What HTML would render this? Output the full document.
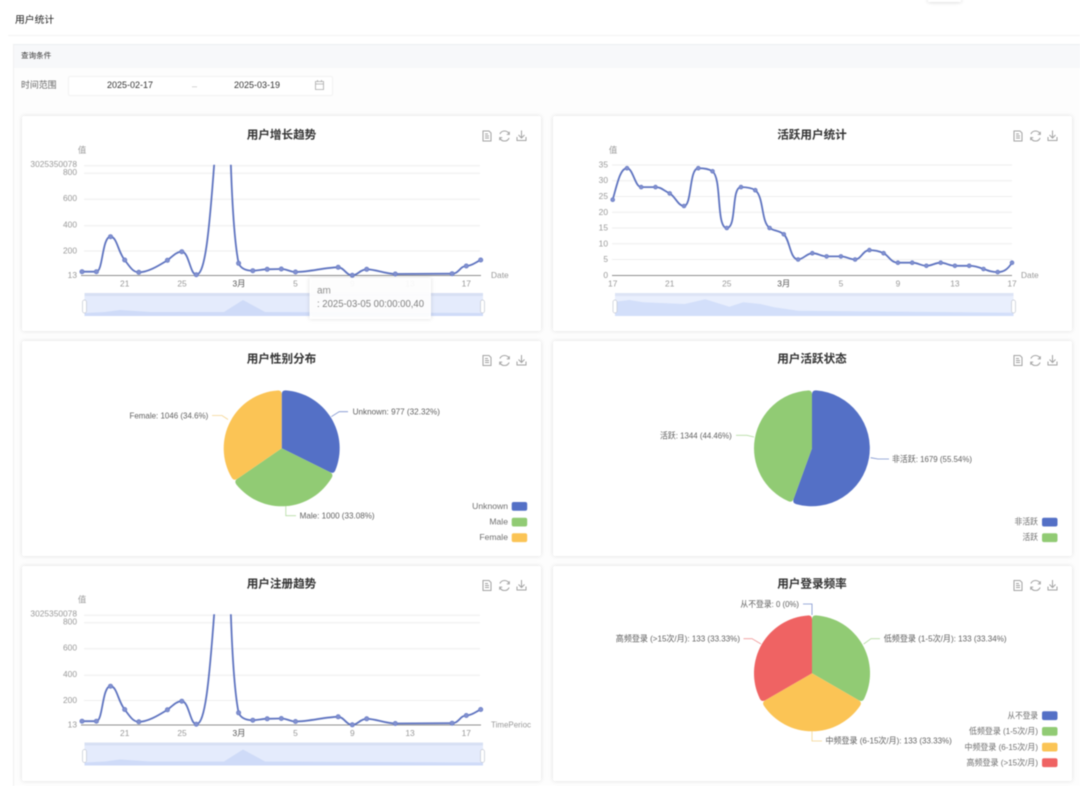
<!DOCTYPE html>
<html lang="zh-CN">
<head>
<meta charset="utf-8">
<title>用户统计</title>
<style>
html,body{margin:0;padding:0;width:1080px;height:786px;overflow:hidden;background:#fff;}
#page{position:relative;width:1080px;height:786px;overflow:hidden;background:#fff;filter:blur(.5px);font-family:"Liberation Sans","Noto Sans CJK SC",sans-serif;}
.abs{position:absolute;box-sizing:border-box;}
.card{position:absolute;background:#fff;border-radius:2px;box-shadow:0 0 5px rgba(0,0,0,.13);}
svg{position:absolute;left:0;top:0;}
svg text{font-family:"Liberation Sans","Noto Sans CJK SC",sans-serif;dominant-baseline:central;}
.title{font-size:11.6px;font-weight:700;fill:#333;text-anchor:middle;}
.ax{font-size:8.4px;fill:#999;}
.yl{font-size:8.4px;fill:#999;text-anchor:end;}
.xl{font-size:8.4px;fill:#999;text-anchor:middle;}
.m3{font-weight:400;fill:#555;}
.lb{font-size:8.6px;fill:#5f5f5f;}
.lg{font-size:8.6px;fill:#6f6f6f;text-anchor:end;}
.grid{stroke:#eeeeee;stroke-width:1;fill:none;}
.axis{stroke:#8f8f8f;stroke-width:1;fill:none;}
.ln{stroke:#5f74c0;stroke-width:1.8;fill:none;}
.dot{fill:#8291d0;stroke:#6c7fc6;stroke-width:.8;}
.ic{stroke:#a3a3a3;stroke-width:1;fill:none;}
.lead{fill:none;stroke-width:.8;}
</style>
</head>
<body>
<div id="page">
  <div class="abs" style="left:928px;top:-4px;width:33px;height:6px;background:#fff;box-shadow:0 0 4px rgba(0,0,0,.2);"></div>
  <div class="abs" style="left:15px;top:14px;font-size:9.8px;line-height:14px;color:#222;">用户统计</div>
  <div class="abs" style="left:8px;top:35px;width:1072px;height:1px;background:#f3f3f3;"></div>
  <div class="abs" style="left:13px;top:44px;width:1067px;height:742px;background:#fdfdfd;border-left:1px solid #f0f0f0;border-top:1px solid #eceef0;"></div>
  <div class="abs" style="left:14px;top:45px;width:1066px;height:23px;background:#f7f8fa;"></div>
  <div class="abs" style="left:21px;top:50px;font-size:7.6px;line-height:12px;color:#333;">查询条件</div>
  <div class="abs" style="left:21px;top:78px;font-size:8.9px;line-height:14px;color:#666;">时间范围</div>
  <div class="abs" style="left:68px;top:76px;width:265px;height:20px;background:#fff;border:1px solid #f2f2f2;border-radius:2px;"></div>
  <div class="abs" style="left:107px;top:78px;font-size:9px;line-height:14px;color:#333;">2025-02-17</div>
  <div class="abs" style="left:192px;top:79px;font-size:9px;line-height:14px;color:#bbb;">–</div>
  <div class="abs" style="left:234px;top:78px;font-size:9px;line-height:14px;color:#333;">2025-03-19</div>

  <div class="card" style="left:22px;top:116px;width:519px;height:215px;"></div>
  <div class="card" style="left:553px;top:116px;width:519px;height:215px;"></div>
  <div class="card" style="left:22px;top:341px;width:519px;height:215px;"></div>
  <div class="card" style="left:553px;top:341px;width:519px;height:215px;"></div>
  <div class="card" style="left:22px;top:566px;width:519px;height:215px;"></div>
  <div class="card" style="left:553px;top:566px;width:519px;height:215px;"></div>

  <svg width="1080" height="786" viewBox="0 0 1080 786" xmlns="http://www.w3.org/2000/svg">
    <defs>
      <clipPath id="c1"><rect x="60" y="164.7" width="440" height="114"/></clipPath>
      <g id="tools">
        <path class="ic" d="M-4,-5 H2 L4,-3 V5 H-4 Z M-2,-2 H1 M-2,0 H2 M-2,2 H2"/>
        <path class="ic" d="M12.9,-2 A5,5 0 0 1 22.1,-2 M22.1,2 A5,5 0 0 1 12.9,2 M22.3,-4.3 V-1.6 H19.8 M12.7,4.3 V1.6 H15.2" />
        <path class="ic" d="M34.5,-5.5 V2 M31.5,-1 L34.5,2 L37.5,-1 M30,1 V4.5 H39 V1"/>
      </g>
      <g id="trend">
        <path class="ln" d="M82,271.7 L96.4,271.7 C103,271.7 102,236.7 110.5,236.7 C117,236.7 118,252 124.7,260 C130,267 133,272.3 138.8,272.3 C148,272.3 158,266 167.4,260.3 C172,257 176,251.7 181.8,251.7 C189,251.7 190,274.7 196.3,274.7 C205,274.7 209,235 214.5,160 L230.7,160 C232,200 234,240 238.6,263.3 C241,269 246,270.7 252.8,270.7 C258,270.7 262,269.3 267.2,269.3 L281.3,269 C287,269 290,272 295.5,272 C310,272 325,267.3 338.2,267.3 C344,267.3 346,275.3 352.3,275.3 C358,275.3 360,269.3 366.7,269.3 C376,269.3 385,274 395.3,274 L452.1,273.7 C459,273.7 460,266 466.3,266 C472,266 476,262 480.7,260"/>
        <g class="dot">
          <circle cx="82" cy="271.7" r="2.1"/><circle cx="96.4" cy="271.7" r="2.1"/><circle cx="110.5" cy="236.7" r="2.1"/><circle cx="124.7" cy="260" r="2.1"/><circle cx="138.8" cy="272.3" r="2.1"/><circle cx="167.4" cy="260.3" r="2.1"/><circle cx="181.8" cy="251.7" r="2.1"/><circle cx="196.3" cy="274.7" r="2.1"/><circle cx="238.6" cy="263.3" r="2.1"/><circle cx="252.8" cy="270.7" r="2.1"/><circle cx="267.2" cy="269.3" r="2.1"/><circle cx="281.3" cy="269" r="2.1"/><circle cx="295.5" cy="272" r="2.1"/><circle cx="338.2" cy="267.3" r="2.1"/><circle cx="352.3" cy="275.3" r="2.1"/><circle cx="366.7" cy="269.3" r="2.1"/><circle cx="395.3" cy="274" r="2.1"/><circle cx="452.1" cy="273.7" r="2.1"/><circle cx="466.3" cy="266" r="2.1"/><circle cx="480.7" cy="260" r="2.1"/>
        </g>
      </g>
      <g id="dz">
        <rect x="84.5" y="293" width="398.5" height="23" fill="#e4ebfc"/>
        <rect x="84.5" y="293" width="398.5" height="3" fill="#d8e0f3"/>
        <path d="M84.5,313 L105,312 L120,310 L150,312 L224,312 L243,300 L265,312 L483,313 V316 H84.5 Z" fill="#cfdbf8"/>
        <rect x="82.5" y="300" width="4" height="13" rx="2" fill="#fff" stroke="#c4c9d4" stroke-width=".7"/>
        <rect x="480.5" y="300" width="4" height="13" rx="2" fill="#fff" stroke="#c4c9d4" stroke-width=".7"/>
      </g>
    </defs>

    <!-- calendar icon -->
    <path d="M315.5,81.5 H323.5 V89.5 H315.5 Z M315.5,84 H323.5 M317.5,80 V82 M321.5,80 V82" fill="none" stroke="#aaa" stroke-width=".8"/>

    <!-- titles -->
    <text class="title" x="281.5" y="135">用户增长趋势</text>
    <text class="title" x="812" y="135">活跃用户统计</text>
    <text class="title" x="281.5" y="359">用户性别分布</text>
    <text class="title" x="812" y="359">用户活跃状态</text>
    <text class="title" x="281.5" y="584">用户注册趋势</text>
    <text class="title" x="812" y="584">用户登录频率</text>

    <!-- toolbars -->
    <use href="#tools" x="487" y="136"/>
    <use href="#tools" x="1018" y="136"/>
    <use href="#tools" x="487" y="360.5"/>
    <use href="#tools" x="1018" y="360.5"/>
    <use href="#tools" x="487" y="585.5"/>
    <use href="#tools" x="1018" y="585.5"/>

    <!-- chart 1 -->
    <path class="grid" d="M84,165.7H480M84,173.3H480M84,199.3H480M84,225.7H480M84,251H480"/>
    <path class="axis" d="M81,275.5H481"/>
    <g clip-path="url(#c1)"><use href="#trend"/></g>
    <text class="xl" x="82" y="150">值</text>
    <text class="yl" x="77" y="164">3025350078</text>
    <text class="yl" x="77" y="172">800</text>
    <text class="yl" x="77" y="198">600</text>
    <text class="yl" x="77" y="224.5">400</text>
    <text class="yl" x="77" y="250.5">200</text>
    <text class="yl" x="77" y="275">13</text>
    <text class="xl" x="124.7" y="283.5">21</text>
    <text class="xl" x="182" y="283.5">25</text>
    <text class="xl m3" x="239" y="283.5">3月</text>
    <text class="xl" x="295.5" y="283.5">5</text>
    <text class="xl" x="466.3" y="283.5">17</text>
    <text class="ax" x="491" y="275">Date</text>
    <use href="#dz"/>
    <text class="xl" x="352.3" y="283.5">9</text>
    <text class="xl" x="410" y="283.5">13</text>
    <!-- tooltip -->
    <rect x="309.5" y="278" width="121.5" height="41" fill="#fff" fill-opacity=".93" style="filter:drop-shadow(0 0 2px rgba(0,0,0,.14))"/>
    <text x="317" y="291" style="font-size:10px;fill:#8f8f8f">am</text>
    <text x="317" y="304.5" textLength="107" lengthAdjust="spacingAndGlyphs" style="font-size:10.4px;fill:#808080">: 2025-03-05 00:00:00,40</text>

    <!-- chart 2 -->
    <path class="grid" d="M612,165H1012M612,180.8H1012M612,196.5H1012M612,212.3H1012M612,228H1012M612,243.8H1012M612,259.5H1012"/>
    <path class="axis" d="M612,275.5H1012"/>
    <path class="ln" d="M612.7,199.7 C617,185 620,168.2 627,168.2 C633,168.2 635,187.1 641.2,187.1 L655.5,187.1 C661,187.1 663,190 669.7,193.4 C675,196 678,206 684,206 C692,206 689,168.2 698.3,168.2 C705,168.2 709,169 712.5,171.3 C722,178 716,228 726.8,228 C737,228 731,187.1 741,187.1 C747,187.1 752,188 755.3,190.2 C764,197 761,222 769.6,228 C773,231 779,230 783.8,234.3 C790,240 790,259.5 798.1,259.5 C803,259.5 807,253.2 812.3,253.2 C818,253.2 821,256.4 826.6,256.4 L840.9,256.4 C846,256.4 850,259.5 855.1,259.5 C861,259.5 863,250.1 869.4,250.1 C875,250.1 879,251 883.6,253.2 C889,256 891,262.7 897.9,262.7 L912.2,262.7 C918,262.7 921,265.8 926.4,265.8 C932,265.8 935,262.7 940.7,262.7 C946,262.7 949,265.8 954.9,265.8 L969.2,265.8 C975,265.8 978,267 983.5,269 C989,271 992,272.1 997.7,272.1 C1004,272.1 1008,269 1012,262.7"/>
    <g class="dot">
      <circle cx="612.7" cy="199.7" r="1.9"/><circle cx="627" cy="168.2" r="1.9"/><circle cx="641.2" cy="187.1" r="1.9"/><circle cx="655.5" cy="187.1" r="1.9"/><circle cx="669.7" cy="193.4" r="1.9"/><circle cx="684" cy="206" r="1.9"/><circle cx="698.3" cy="168.2" r="1.9"/><circle cx="712.5" cy="171.3" r="1.9"/><circle cx="726.8" cy="228" r="1.9"/><circle cx="741" cy="187.1" r="1.9"/><circle cx="755.3" cy="190.2" r="1.9"/><circle cx="769.6" cy="228" r="1.9"/><circle cx="783.8" cy="234.3" r="1.9"/><circle cx="798.1" cy="259.5" r="1.9"/><circle cx="812.3" cy="253.2" r="1.9"/><circle cx="826.6" cy="256.4" r="1.9"/><circle cx="840.9" cy="256.4" r="1.9"/><circle cx="855.1" cy="259.5" r="1.9"/><circle cx="869.4" cy="250.1" r="1.9"/><circle cx="883.6" cy="253.2" r="1.9"/><circle cx="897.9" cy="262.7" r="1.9"/><circle cx="912.2" cy="262.7" r="1.9"/><circle cx="926.4" cy="265.8" r="1.9"/><circle cx="940.7" cy="262.7" r="1.9"/><circle cx="954.9" cy="265.8" r="1.9"/><circle cx="969.2" cy="265.8" r="1.9"/><circle cx="983.5" cy="269" r="1.9"/><circle cx="997.7" cy="272.1" r="1.9"/><circle cx="1012" cy="262.7" r="1.9"/>
    </g>
    <text class="xl" x="613" y="150">值</text>
    <text class="yl" x="608" y="164.5">35</text>
    <text class="yl" x="608" y="180">30</text>
    <text class="yl" x="608" y="196">25</text>
    <text class="yl" x="608" y="212">20</text>
    <text class="yl" x="608" y="227.5">15</text>
    <text class="yl" x="608" y="243.5">10</text>
    <text class="yl" x="608" y="259">5</text>
    <text class="yl" x="608" y="275">0</text>
    <text class="xl" x="612.7" y="283.5">17</text>
    <text class="xl" x="669.7" y="283.5">21</text>
    <text class="xl" x="726.8" y="283.5">25</text>
    <text class="xl m3" x="783.8" y="283.5">3月</text>
    <text class="xl" x="840.9" y="283.5">5</text>
    <text class="xl" x="897.9" y="283.5">9</text>
    <text class="xl" x="954.9" y="283.5">13</text>
    <text class="xl" x="1012" y="283.5">17</text>
    <text class="ax" x="1021" y="275">Date</text>
    <rect x="615" y="293" width="398.5" height="23" fill="#e9effd"/>
    <rect x="615" y="293" width="398.5" height="3" fill="#dde4f5"/>
    <path d="M615,301.7 L629.5,300 L643.3,302.3 L684.6,304 L705.3,299.3 L729.4,306.7 L743.2,302.3 L760.4,304 L774.2,307.3 L798.3,310.7 L1013.5,312.7 V316 H615 Z" fill="#d3dffa"/>
    <rect x="613" y="300" width="4" height="13" rx="2" fill="#fff" stroke="#c4c9d4" stroke-width=".7"/>
    <rect x="1011.5" y="300" width="4" height="13" rx="2" fill="#fff" stroke="#c4c9d4" stroke-width=".7"/>

    <!-- pie 1 -->
    <path fill="#5470c6" d="M281.7,448.3 L281.7,394.3 Q281.7,390.3 285.7,390.4 A58,58 0 0 1 335.3,470.35 Q333.7,474.04 330.1,472.27 Z"/>
    <path fill="#91cb74" d="M281.7,448.3 L330.1,472.27 Q333.7,474.04 331.75,477.6 A58,58 0 0 1 236.35,484.46 Q233.93,481.2 237.23,478.93 Z"/>
    <path fill="#fbc455" d="M281.7,448.3 L237.23,478.93 Q233.93,481.2 231.76,477.79 A58,58 0 0 1 277.65,390.44 Q281.7,390.3 281.7,394.3 Z"/>
    <path class="lead" stroke="#7d92cf" d="M331.3,416.7 L339.2,411.7 H348"/>
    <path class="lead" stroke="#f5d590" d="M212,415.5 H222 L228,419.5"/>
    <path class="lead" stroke="#b5dca3" d="M285.8,506 V515.7 H296"/>
    <text class="lb" x="352.6" y="411.3" textLength="87.4" lengthAdjust="spacingAndGlyphs">Unknown: 977 (32.32%)</text>
    <text class="lb" x="129.5" y="415.3" textLength="78.8" lengthAdjust="spacingAndGlyphs">Female: 1046 (34.6%)</text>
    <text class="lb" x="299.6" y="515.3" textLength="75" lengthAdjust="spacingAndGlyphs">Male: 1000 (33.08%)</text>
    <rect x="511.7" y="502" width="15.5" height="8.8" rx="2" fill="#5470c6"/>
    <rect x="511.7" y="517.7" width="15.5" height="8.8" rx="2" fill="#91cb74"/>
    <rect x="511.7" y="533.3" width="15.5" height="8.8" rx="2" fill="#fbc455"/>
    <text class="lg" x="508" y="506">Unknown</text>
    <text class="lg" x="508" y="521.5">Male</text>
    <text class="lg" x="508" y="537">Female</text>

    <!-- pie 2 -->
    <path fill="#5470c6" d="M812,448.3 L812,394.3 Q812,390.3 816,390.4 A58,58 0 1 1 796.07,504.07 Q792.2,502.83 793.59,499.06 Z"/>
    <path fill="#91cb74" d="M812,448.3 L793.59,499.06 Q792.2,502.83 788.47,501.31 A58,58 0 0 1 807.95,390.44 Q812,390.3 812,394.3 Z"/>
    <path class="lead" stroke="#7d92cf" d="M870.6,457.7 L878,459 H889"/>
    <path class="lead" stroke="#b5dca3" d="M736,435.3 H747 L754,437"/>
    <text class="lb" x="892" y="459" textLength="80" lengthAdjust="spacingAndGlyphs">非活跃: 1679 (55.54%)</text>
    <text class="lb" x="660" y="435.3" textLength="71.8" lengthAdjust="spacingAndGlyphs">活跃: 1344 (44.46%)</text>
    <rect x="1042" y="517.7" width="15.5" height="8.8" rx="2" fill="#5470c6"/>
    <rect x="1042" y="533.3" width="15.5" height="8.8" rx="2" fill="#91cb74"/>
    <text class="lg" x="1038" y="521.5" textLength="23.5" lengthAdjust="spacingAndGlyphs">非活跃</text>
    <text class="lg" x="1038" y="537" textLength="15.5" lengthAdjust="spacingAndGlyphs">活跃</text>

    <!-- chart 3 -->
    <g transform="translate(0,449.5)">
      <path class="grid" d="M84,165.7H480M84,173.3H480M84,199.3H480M84,225.7H480M84,251H480"/>
      <path class="axis" d="M81,275.5H481"/>
      <g clip-path="url(#c1)"><use href="#trend"/></g>
      <text class="xl" x="82" y="150">值</text>
      <text class="yl" x="77" y="164">3025350078</text>
      <text class="yl" x="77" y="172">800</text>
      <text class="yl" x="77" y="198">600</text>
      <text class="yl" x="77" y="224.5">400</text>
      <text class="yl" x="77" y="250.5">200</text>
      <text class="yl" x="77" y="275">13</text>
      <text class="xl" x="124.7" y="283.5">21</text>
      <text class="xl" x="182" y="283.5">25</text>
      <text class="xl m3" x="239" y="283.5">3月</text>
      <text class="xl" x="295.5" y="283.5">5</text>
      <text class="xl" x="352.3" y="283.5">9</text>
      <text class="xl" x="410" y="283.5">13</text>
      <text class="xl" x="466.3" y="283.5">17</text>
      <text class="ax" x="491" y="275" textLength="40" lengthAdjust="spacingAndGlyphs">TimePerioc</text>
      <use href="#dz"/>
    </g>

    <!-- pie 3 -->
    <path fill="#91cb74" d="M812,673.3 L812,619.3 Q812,615.3 816,615.4 A58,58 0 0 1 864.13,698.73 Q862.23,702.3 858.76,700.3 Z"/>
    <path fill="#fbc455" d="M812,673.3 L858.76,700.3 Q862.23,702.3 860.08,705.73 A58,58 0 0 1 763.92,705.73 Q761.77,702.3 765.24,700.3 Z"/>
    <path fill="#ef6363" d="M812,673.3 L765.24,700.3 Q761.77,702.3 759.87,698.73 A58,58 0 0 1 807.95,615.44 Q812,615.3 812,619.3 Z"/>
    <path class="lead" stroke="#7d92cf" d="M803,604 H812 V615"/>
    <path class="lead" stroke="#b5dca3" d="M863.7,644 L871,638.7 H880"/>
    <path class="lead" stroke="#f09a9a" d="M743.5,638.7 H752 L761,644"/>
    <path class="lead" stroke="#f5d590" d="M812,731 V741 H822"/>
    <text class="lb" x="740.4" y="604" textLength="58.6" lengthAdjust="spacingAndGlyphs">从不登录: 0 (0%)</text>
    <text class="lb" x="883.7" y="638.7" textLength="122.9" lengthAdjust="spacingAndGlyphs">低频登录 (1-5次/月): 133 (33.34%)</text>
    <text class="lb" x="615.8" y="638.7" textLength="124.2" lengthAdjust="spacingAndGlyphs">高频登录 (&gt;15次/月): 133 (33.33%)</text>
    <text class="lb" x="825.5" y="740.7" textLength="126.3" lengthAdjust="spacingAndGlyphs">中频登录 (6-15次/月): 133 (33.33%)</text>
    <rect x="1042" y="711.3" width="15.5" height="8.8" rx="2" fill="#5470c6"/>
    <rect x="1042" y="727" width="15.5" height="8.8" rx="2" fill="#91cb74"/>
    <rect x="1042" y="742.7" width="15.5" height="8.8" rx="2" fill="#fbc455"/>
    <rect x="1042" y="758.3" width="15.5" height="8.8" rx="2" fill="#ef6363"/>
    <text class="lg" x="1038" y="715.5" textLength="30.5" lengthAdjust="spacingAndGlyphs">从不登录</text>
    <text class="lg" x="1038" y="731" textLength="69" lengthAdjust="spacingAndGlyphs">低频登录 (1-5次/月)</text>
    <text class="lg" x="1038" y="746.8" textLength="73.5" lengthAdjust="spacingAndGlyphs">中频登录 (6-15次/月)</text>
    <text class="lg" x="1038" y="762.5" textLength="71.5" lengthAdjust="spacingAndGlyphs">高频登录 (&gt;15次/月)</text>
  </svg>
</div>
</body>
</html>
